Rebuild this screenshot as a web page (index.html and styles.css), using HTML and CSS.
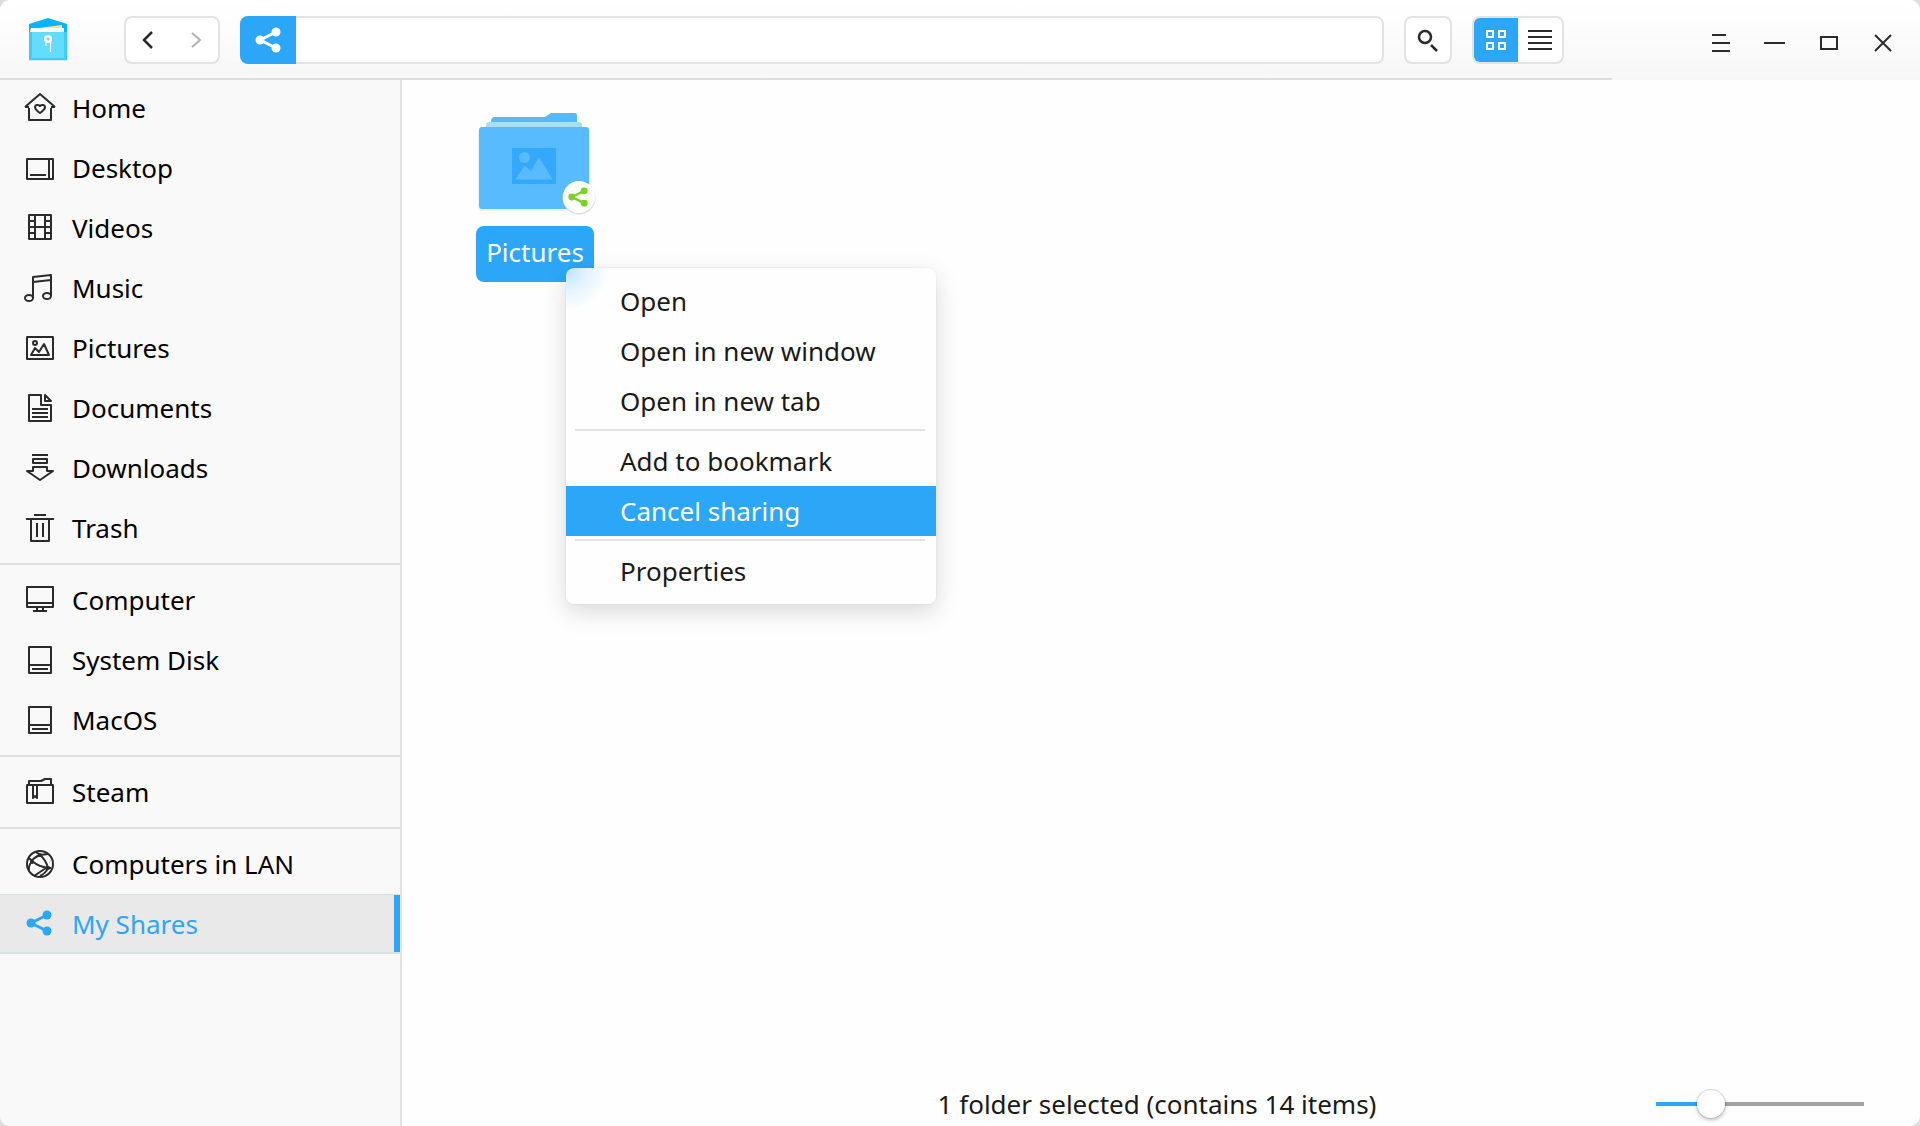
FILE: index.html
```
<!DOCTYPE html>
<html lang="en">
<head>
<meta charset="utf-8">
<title>My Shares</title>
<link rel="stylesheet" href="styles.css">
</head>
<body>
<svg class="sprite" aria-hidden="true">
  <symbol id="share" viewBox="0 0 26 26">
    <path d="M5 13 21 5M5 13 21 21" fill="none" stroke="currentColor" stroke-width="3"/>
    <circle cx="5" cy="13" r="4.500" fill="currentColor"/><circle cx="21" cy="5" r="4.500" fill="currentColor"/><circle cx="21" cy="21" r="4.500" fill="currentColor"/>
  </symbol>
  <symbol id="disk" viewBox="0 0 32 32"><path d="M5 3h22v26H5zM5 21h22M8 25h16"/></symbol>
</svg>
<div class="window">
  <header class="titlebar">
    <svg class="logo" viewBox="0 0 38 44" aria-hidden="true">
      <path d="M0 42h38v1H0z" fill="#dfe6ea"/>
      <path d="M0 6 19 0l19 6v36H0z" fill="#08b4fb"/>
      <path d="M1 11 33 7v8H1z" fill="#fbe192"/>
      <path d="M2 10h33v6H2z" fill="#fff"/>
      <path d="M0 14h38v28H0z" fill="#3ccdfb"/>
      <path d="M3 14h32v26H3z" fill="#63dcff"/>
      <circle cx="19" cy="21" r="2.750" fill="none" stroke="#fff" stroke-width="2.500"/>
      <path d="M17 23v5M21.500 23v11" stroke="#fff" stroke-width="1.200"/>
    </svg>
    <div class="history">
      <button type="button" aria-label="Back"><svg viewBox="0 0 16 18"><path d="M11 1 3 9l8 8" fill="none" stroke="#2b2b2b" stroke-width="2.500"/></svg></button>
      <button type="button" aria-label="Forward" disabled><svg viewBox="0 0 16 18"><path d="m5 2 8 7-8 7" fill="none" stroke="#b0b0b0" stroke-width="2"/></svg></button>
    </div>
    <div class="address">
      <button type="button" class="crumb" aria-label="My Shares"><svg><use href="#share"/></svg></button>
      <input type="text" aria-label="Location">
    </div>
    <button type="button" class="search" aria-label="Search"><svg viewBox="0 0 24 24"><circle cx="9" cy="9" r="6" fill="none" stroke="#2b2b2b" stroke-width="2.500"/><path d="m15 17 6 6" stroke="#2b2b2b" stroke-width="2.500"/></svg></button>
    <div class="views">
      <button type="button" class="active" aria-label="Icon view"><svg viewBox="0 0 24 24"><path d="M3 3h6v6H3zM15 3h6v6h-6zM3 15h6v6H3zM15 15h6v6h-6z" fill="none" stroke="#fff" stroke-width="2"/></svg></button>
      <button type="button" aria-label="List view"><svg viewBox="0 0 24 24"><path d="M0 3h24M0 9h24M0 15h24M0 21h24" stroke="#2b2b2b" stroke-width="2"/></svg></button>
    </div>
    <div class="controls">
      <button type="button" aria-label="Menu"><svg viewBox="0 0 24 24"><path d="M3 4h14M3 12h18M3 20h18" stroke="#2b2b2b" stroke-width="2"/></svg></button>
      <button type="button" aria-label="Minimize"><svg viewBox="0 0 24 24"><path d="M1 12h21" stroke="#2b2b2b" stroke-width="2"/></svg></button>
      <button type="button" aria-label="Maximize"><svg viewBox="0 0 24 24"><path d="M4 6h16v12H4z" fill="none" stroke="#2b2b2b" stroke-width="2"/></svg></button>
      <button type="button" aria-label="Close"><svg viewBox="0 0 24 24"><path d="m4 4 16 16M20 4 4 20" stroke="#2b2b2b" stroke-width="2"/></svg></button>
    </div>
  </header>
  <div class="body">
    <nav class="sidebar" aria-label="Places">
      <a href="#home"><svg viewBox="0 0 32 32"><path d="M5 16v12h22V16M1 15 16 2l15 13M1 15h4M27 15h4"/><path d="M16 21c-3-2-5-4-5-6s3-3 5-1c2-2 5-1 5 1s-2 4-5 6z"/></svg>Home</a>
      <a href="#desktop"><svg viewBox="0 0 32 32"><path d="M3 7h26v20H3zM25 7v20M6 23h16"/></svg>Desktop</a>
      <a href="#videos"><svg viewBox="0 0 32 32"><path d="M5 3h22v24H5zM11 3v24M21 3v24M11 15h10M5 9h6M5 15h6M5 21h6M21 9h6M21 15h6M21 21h6"/></svg>Videos</a>
      <a href="#music"><svg viewBox="0 0 32 32"><path d="M9 26V5l18-2v21M9 10l18-2"/><ellipse cx="5" cy="26" rx="4" ry="3"/><ellipse cx="23" cy="24" rx="4" ry="3"/></svg>Music</a>
      <a href="#pictures"><svg viewBox="0 0 32 32"><path d="M3 5h26v22H3zM7 23l4-7 4 4 5-8 5 11z"/><circle cx="11" cy="11" r="2"/></svg>Pictures</a>
      <a href="#documents"><svg viewBox="0 0 32 32"><path d="M17 3H5v26h22V13H17zM21 3v6h6zM8 17h16M8 21h16M8 25h16"/></svg>Documents</a>
      <a href="#downloads"><svg viewBox="0 0 32 32"><path d="M8 3h16M9 7h14v4H9zM9 15h14v4h6L16 28 3 19h6z"/></svg>Downloads</a>
      <a href="#trash"><svg viewBox="0 0 32 32"><path d="M10 3h12M2 7h28M7 7v22h18V7M13 11v14M19 11v14"/></svg>Trash</a>
      <hr>
      <a href="#computer"><svg viewBox="0 0 32 32"><path d="M3 3h26v20H3zM3 19h26M13 23v4M19 23v4M9 27h14"/></svg>Computer</a>
      <a href="#system"><svg><use href="#disk"/></svg>System Disk</a>
      <a href="#macos"><svg><use href="#disk"/></svg>MacOS</a>
      <hr>
      <a href="#steam"><svg viewBox="0 0 32 32"><path d="M3 9h26v18H3zM5 9V5h12l4-2h6v6M9 9v13l2-2 2 2V9"/></svg>Steam</a>
      <hr>
      <a href="#lan"><svg viewBox="0 0 32 32"><circle cx="16" cy="16" r="13"/><path d="M16 7Q9 10 8 13q8 7 19 7M16 7q6 5 8 13-2 5-8 8M5 10l3 3q-4 5-3 10M12 4l4 3 8-1M22 20l-12 8"/><circle cx="16" cy="7" r="1"/><circle cx="8" cy="14" r="1"/><circle cx="24" cy="20" r="1"/></svg>Computers in LAN</a>
      <a href="#shares" class="current" aria-current="page"><svg viewBox="0 0 32 32"><use href="#share" x="2" y="2" width="26" height="26"/></svg>My Shares</a>
    </nav>
    <main class="content">
      <div class="files">
        <figure class="file">
          <svg viewBox="0 0 118 110" aria-hidden="true">
            <rect x="2" y="21" width="112" height="82" rx="4" fill="#000" opacity=".05"/>
            <path d="M15 14q0-5 4-5h50l6-4h24q2 0 2 3v10H15z" fill="#58b8fc"/>
            <path d="M10 17q0-3 3-3h90q3 0 3 3v6H10z" fill="#a9dcfd"/>
            <rect x="3" y="19" width="110" height="82" rx="3" fill="#57bbfd"/>
            <path d="M36 40h44v36H36z" fill="#34a9fb"/>
            <circle cx="48.500" cy="49.500" r="5.500" fill="#57bbfd"/>
            <path d="M40 71 49 58l6 6 8-14 13 21z" fill="#57bbfd" stroke="#57bbfd" stroke-linejoin="round"/>
            <circle cx="103" cy="90" r="16.500" fill="#d9dfe3"/>
            <circle cx="103" cy="89" r="16" fill="#fff"/>
            <use href="#share" x="92" y="79" width="20" height="20" color="#75d321"/>
          </svg>
          <figcaption>Pictures</figcaption>
        </figure>
        <div class="menu" role="menu">
          <button type="button" role="menuitem">Open</button>
          <button type="button" role="menuitem">Open in new window</button>
          <button type="button" role="menuitem">Open in new tab</button>
          <hr>
          <button type="button" role="menuitem">Add to bookmark</button>
          <button type="button" role="menuitem" class="hover">Cancel sharing</button>
          <hr>
          <button type="button" role="menuitem">Properties</button>
        </div>
      </div>
      <footer class="status">
        <span>1 folder selected (contains 14 items)</span>
        <input type="range" min="0" max="100" value="23" aria-label="Icon size">
      </footer>
    </main>
  </div>
</div>
</body>
</html>
```
FILE: styles.css
```
* { box-sizing: border-box; }
body {
  margin: 0;
  background: #ddd;
  color: #000;
  font: 26px/36px "Noto Sans", sans-serif;
}
button, input { font: inherit; color: inherit; }
button { padding: 0; border: 0; background: none; }
.sprite { position: absolute; width: 0; height: 0; }

.window {
  display: flex;
  flex-direction: column;
  min-height: 100vh;
  border-radius: 10px;
  overflow: hidden;
  background: #fefefe;
}

/* Title bar */
.titlebar {
  position: relative;
  z-index: 1;
  display: flex;
  align-items: center;
  height: 80px;
  margin-bottom: -2px;
  padding: 0 13px 0 29px;
  background: linear-gradient(#fff, #f7f7f7);
}
.titlebar::after {
  content: "";
  position: absolute;
  left: 0;
  right: 308px;
  bottom: 0;
  height: 2px;
  background: #dedede;
}
.logo { width: 38px; height: 44px; margin-right: 57px; }
.history, .address, .search, .views {
  height: 48px;
  border: 2px solid #e3e3e3;
  border-radius: 8px;
  background: #fff;
}
.history, .views, .address, .controls { display: flex; }
.history { width: 96px; margin-right: 20px; }
.history button, .views button, .controls button, .search {
  display: flex;
  align-items: center;
  justify-content: center;
}
.history button, .views button { flex: 1; }
.history svg { width: 16px; height: 18px; }
.address { flex: 1; margin-right: 20px; }
.address input { flex: 1; min-width: 0; border: 0; background: none; outline: 0; padding: 0 12px; }
.crumb {
  display: flex;
  align-items: center;
  justify-content: center;
  width: 56px;
  margin: -2px 0 -2px -2px;
  border-radius: 8px 0 0 8px;
  background: #2ca7f8;
  color: #fff;
}
.crumb svg { width: 26px; height: 26px; }
.search { width: 48px; margin-right: 20px; }
.search svg, .views svg, .controls svg { width: 24px; height: 24px; }
.views { width: 92px; margin-right: 133px; overflow: hidden; }
.views .active { background: #2ca7f8; }
.controls { gap: 6px; padding-top: 6px; }
.controls button { width: 48px; height: 48px; }

/* Places */
.body { display: flex; flex: 1; }
.sidebar {
  width: 402px;
  border-right: 2px solid #e3e3e3;
  background: #f9f9f9;
}
.sidebar a {
  display: flex;
  align-items: center;
  gap: 16px;
  height: 60px;
  padding-left: 24px;
  color: inherit;
  text-decoration: none;
}
.sidebar svg {
  width: 32px;
  height: 32px;
  fill: none;
  stroke: #2b2b2b;
  stroke-width: 2;
  stroke-linejoin: round;
}
.sidebar .current {
  border-top: 1px solid #d3e0e8;
  border-bottom: 2px solid #d9e0e3;
  background: #e9e9e9;
  box-shadow: inset -6px 0 #2ca7f8;
  color: #2ca7f8;
}
.sidebar .current svg { stroke: none; }
.sidebar hr { margin: 5px 0; border: 0; border-top: 2px solid #e0e0e0; }

/* Files */
.content { display: flex; flex: 1; flex-direction: column; }
.files { position: relative; flex: 1; padding: 30px 74px; }
.file { width: 118px; margin: 0; }
.file svg { display: block; width: 118px; height: 110px; overflow: visible; }
.file figcaption {
  margin-top: 8px;
  padding: 8px 0 12px;
  border-radius: 8px;
  background: #2ca7f8;
  color: #fff;
  text-align: center;
}

/* Context menu */
.menu {
  position: absolute;
  left: 164px;
  top: 190px;
  width: 370px;
  padding: 8px 0;
  border-radius: 8px;
  background: radial-gradient(circle at 0 0, #bde1fc, #e4f3fd 22px, #fefefe 44px);
  box-shadow: 0 8px 24px #00000026, 0 0 2px #0000001a;
  color: #1a1a1a;
}
.menu button {
  display: block;
  width: 100%;
  height: 50px;
  padding-left: 54px;
  text-align: left;
}
.menu .hover { background: #2ca7f8; color: #fff; }
.menu hr { margin: 3px 11px 5px 9px; border: 0; border-top: 2px solid #e3e3e3; }

/* Status bar */
.status {
  display: grid;
  grid-template-columns: 1fr auto 1fr;
  align-items: center;
  height: 44px;
  padding: 0 56px 0 48px;
  color: #1a1a1a;
}
.status span { grid-column: 2; }
.status input {
  justify-self: end;
  width: 208px;
  height: 32px;
  margin: 0;
  appearance: none;
  background: linear-gradient(90deg, #2ca7f8 27%, #a3a3a3 27%) center / 100% 4px no-repeat;
}
.status input::-webkit-slider-thumb {
  appearance: none;
  width: 28px;
  height: 28px;
  border-radius: 50%;
  background: #fff;
  box-shadow: 0 0 0 1px #0000001f, 0 2px 4px #00000040;
}
```
